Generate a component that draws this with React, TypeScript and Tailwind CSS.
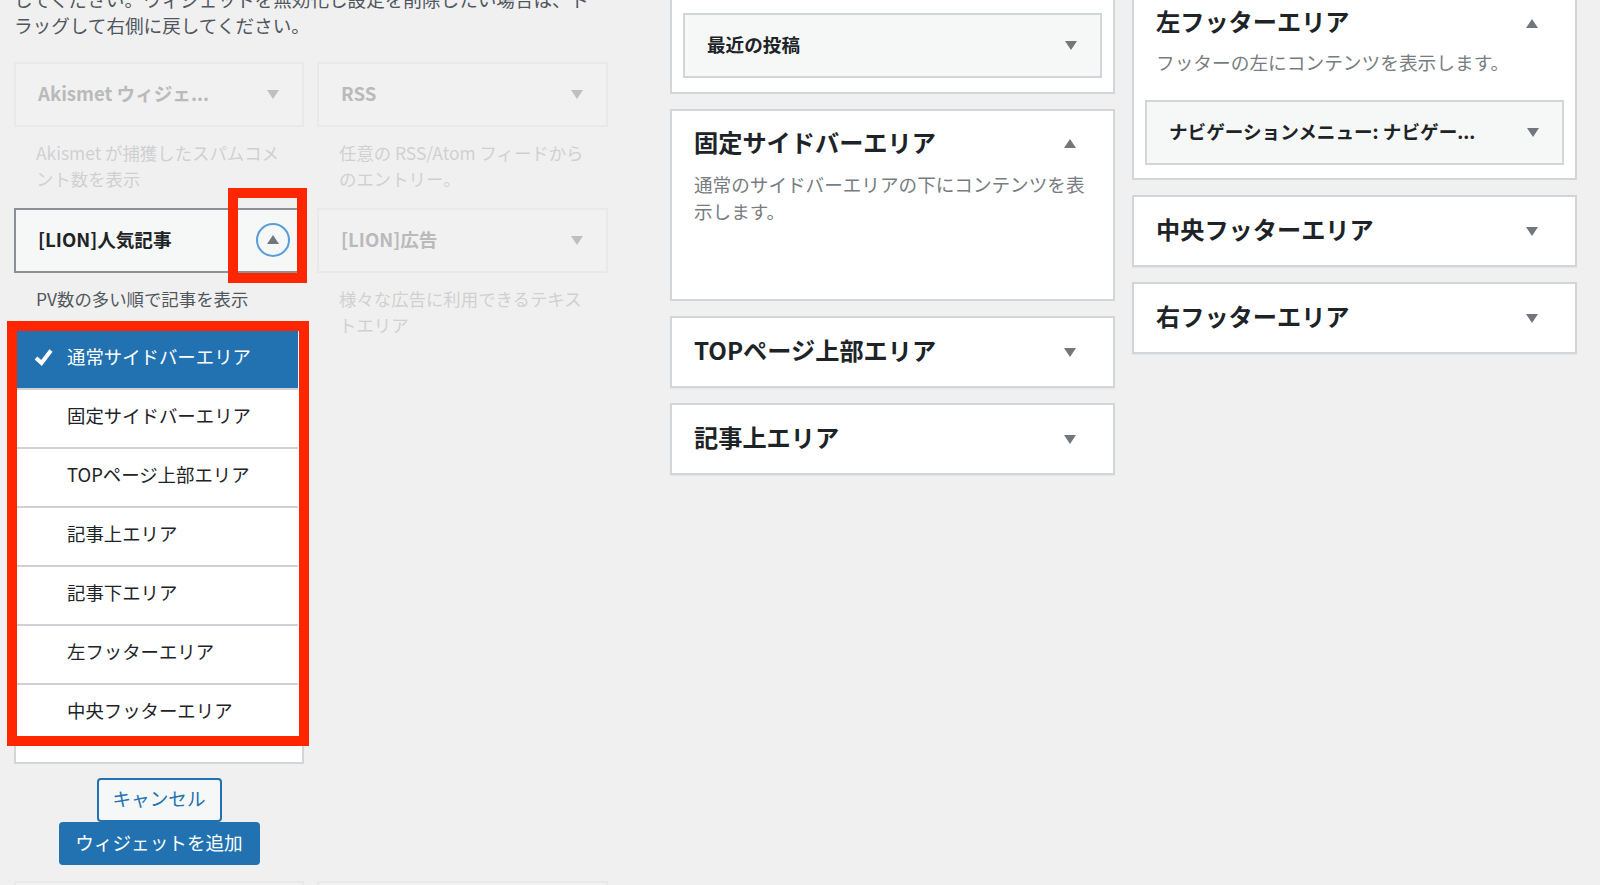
import React from 'react';

const Arrow = ({ up = false }: { up?: boolean }) => (
  <svg viewBox="0 0 12 9" className="h-[9px] w-[12px]">
    <polygon points={up ? '6,0 12,9 0,9' : '0,0 12,0 6,9'} fill="#72777c" />
  </svg>
);

const Widget = ({ title, active = false, faded = false }: { title: string; active?: boolean; faded?: boolean }) => (
  <div
    className={`relative flex h-[65px] items-center justify-between border-2 pl-[22px] pr-[12px] ${
      active ? 'border-[#8c8f94] bg-[#f6f7f7]' : faded ? 'border-[#e9e9e9] bg-[#f1f1f1]' : 'border-[#d3d6d9] bg-[#f6f7f7]'
    }`}
  >
    <span
      className={`truncate pb-[4px] text-[18.6px] font-bold ${faded ? 'text-[#b9babb]' : 'text-[#1d2327]'}`}
    >
      {title}
    </span>
    <span
      className={`flex h-[34px] w-[34px] shrink-0 items-center justify-center rounded-full ${
        active ? '-translate-y-px border-2 border-[#5b9dd9]' : ''
      } ${faded ? 'opacity-40' : ''}`}
    >
      <Arrow up={active} />
    </span>
  </div>
);

const Desc = ({ lines, faded = false }: { lines: string[]; faded?: boolean }) => (
  <p className={`mt-[13px] pl-[22px] text-[17.4px] leading-[26px] ${faded ? 'text-[#d0d0d1]' : 'text-[#50575e]'}`}>
    {lines.map((l) => (
      <span key={l} className="block whitespace-nowrap">
        {l}
      </span>
    ))}
  </p>
);

const Panel = ({ title }: { title: string }) => (
  <div className="border-2 border-[#d3d6d9] bg-white shadow-[0_1px_1px_rgba(0,0,0,0.04)]">
    <div className="flex h-[68px] items-center justify-between pl-[22px] pr-[37px]">
      <h3 className="pb-[3px] text-[24.2px] font-bold text-[#1d2327]">{title}</h3>
      <Arrow />
    </div>
  </div>
);

const areas = [
  '通常サイドバーエリア',
  '固定サイドバーエリア',
  'TOPページ上部エリア',
  '記事上エリア',
  '記事下エリア',
  '左フッターエリア',
  '中央フッターエリア',
];

export default function App() {
  return (
    <div className="flex h-[885px] w-[1600px] overflow-hidden bg-[#f0f0f0] font-['Noto_Sans_CJK_JP',sans-serif]">
      {/* available widgets */}
      <div className="ml-[14px] w-[595px] shrink-0">
        <p className="-mt-[14px] text-[18.6px] leading-[26px] text-[#50575e]">
          <span className="block whitespace-nowrap">してください。ウィジェットを無効化し設定を削除したい場合は、ド</span>
          <span className="block whitespace-nowrap">ラッグして右側に戻してください。</span>
        </p>
        <div className="mt-[24px] grid grid-cols-[290px_291px] items-start gap-x-[13px] gap-y-[16px]">
          <div>
            <Widget title="Akismet ウィジェ..." faded />
            <Desc faded lines={['Akismet が捕獲したスパムコメ', 'ント数を表示']} />
          </div>
          <div>
            <Widget title="RSS" faded />
            <Desc faded lines={['任意の RSS/Atom フィードから', 'のエントリー。']} />
          </div>
          <div>
            <div className="relative">
              <Widget title="[LION]人気記事" active />
              <div className="pointer-events-none absolute -top-[20px] left-[214px] h-[95px] w-[79px] border-[10px] border-[#ff2600]" />
            </div>
            <Desc lines={['PV数の多い順で記事を表示']} />
            <div className="mt-[17px] h-[435px] border-2 border-[#d3d6d9] bg-white">
              <div className="relative ml-[1px] mr-[4px] h-[405px]">
                <ul className="h-[405px] overflow-hidden">
                  {areas.map((a, i) => (
                    <li
                      key={a}
                      className={`relative flex h-[59px] items-center border-b-2 border-[#cfd1d6] pb-[6px] pl-[50px] text-[18.4px] ${
                        i === 0 ? 'bg-[#2271b1] text-white' : 'text-[#1d2327]'
                      }`}
                    >
                      {i === 0 && (
                        <svg viewBox="0 0 19 18" className="absolute left-[17px] top-[17px] h-[18px] w-[19px]">
                          <path d="M2 10 L7.5 15 L17 2.5" fill="none" stroke="#fff" strokeWidth="4" />
                        </svg>
                      )}
                      {a}
                    </li>
                  ))}
                </ul>
                <div className="pointer-events-none absolute -bottom-[10px] -left-[10px] -right-[11px] -top-[10px] border-[10px] border-[#ff2600]" />
              </div>
            </div>
            <div className="mt-[14px] flex flex-col items-center">
              <button className="h-[44px] w-[125px] rounded-[4px] border-2 border-[#2271b1] bg-[#f6f7f7] pb-[4px] text-[18.6px] text-[#2271b1]">
                キャンセル
              </button>
              <button className="h-[43px] w-[201px] rounded-[4px] bg-[#2271b1] pb-[4px] text-[18.6px] text-white">
                ウィジェットを追加
              </button>
            </div>
          </div>
          <div>
            <Widget title="[LION]広告" faded />
            <Desc faded lines={['様々な広告に利用できるテキス', 'トエリア']} />
          </div>
          <Widget title=" " faded />
          <Widget title=" " faded />
        </div>
      </div>

      {/* sidebar areas, middle */}
      <div className="ml-[61px] flex w-[445px] shrink-0 flex-col gap-[15px]">
        <div className="-mt-[20px] border-2 border-[#d3d6d9] bg-white px-[11px] pb-[14px] pt-[31px]">
          <Widget title="最近の投稿" />
        </div>
        <div className="h-[192px] border-2 border-[#d3d6d9] bg-white">
          <div className="flex h-[64px] items-center justify-between pl-[22px] pr-[37px]">
            <h3 className="pb-[2px] text-[24.2px] font-bold text-[#1d2327]">固定サイドバーエリア</h3>
            <Arrow up />
          </div>
          <p className="-mt-[5px] pl-[22px] pr-[21px] text-[18.6px] leading-[27px] text-[#787c82]">
            通常のサイドバーエリアの下にコンテンツを表示します。
          </p>
        </div>
        <Panel title="TOPページ上部エリア" />
        <Panel title="記事上エリア" />
      </div>

      {/* sidebar areas, right */}
      <div className="ml-[17px] flex w-[445px] shrink-0 flex-col gap-[15px]">
        <div className="-mt-[20px] border-2 border-[#d3d6d9] bg-white pb-[13px] pt-[21px]">
          <div className="flex h-[40px] items-center justify-between pl-[22px] pr-[37px]">
            <h3 className="pb-[3px] text-[24.2px] font-bold text-[#1d2327]">左フッターエリア</h3>
            <Arrow up />
          </div>
          <p className="mt-[4.5px] pl-[22px] text-[18.7px] leading-[27px] text-[#787c82]">フッターの左にコンテンツを表示します。</p>
          <div className="mx-[11px] mt-[25.5px]">
            <Widget title="ナビゲーションメニュー: ナビゲー..." />
          </div>
        </div>
        <Panel title="中央フッターエリア" />
        <Panel title="右フッターエリア" />
      </div>
    </div>
  );
}
